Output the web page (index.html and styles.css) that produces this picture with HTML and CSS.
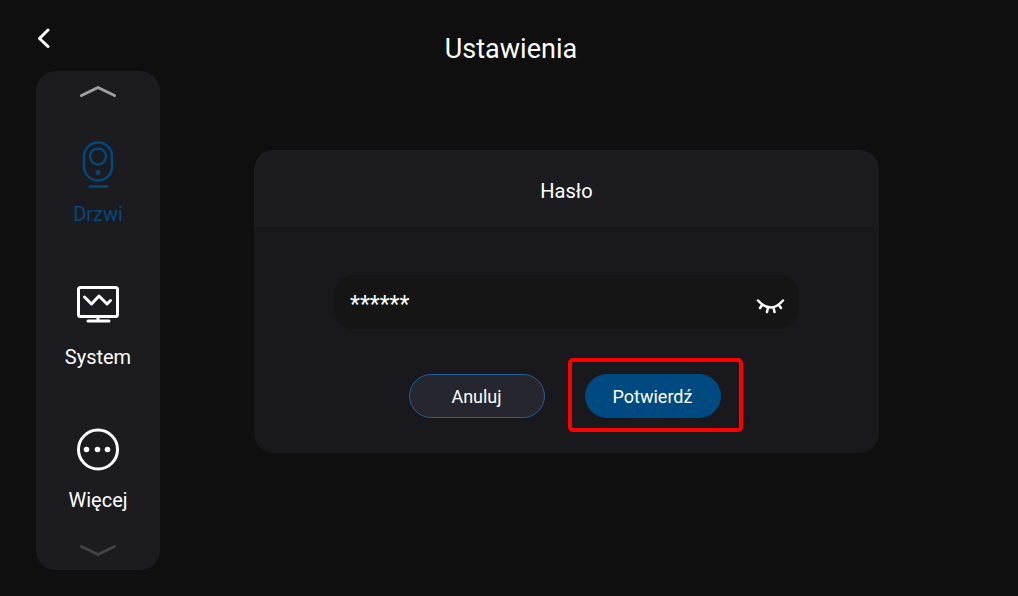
FILE: index.html
```html
<!DOCTYPE html>
<html lang="pl">
<head>
  <meta charset="UTF-8" />
  <meta name="viewport" content="width=device-width, initial-scale=1.0" />
  <title>Ustawienia</title>
  <link rel="stylesheet" href="styles.css">
</head>
<body>
  <header class="topbar">
    <button class="icon-btn back" type="button" aria-label="Wstecz">
      <svg width="14" height="20" viewBox="0 0 14 20"><path d="M12 2 3.500 10.500l8.500 8" /></svg>
    </button>
    <h1>Ustawienia</h1>
  </header>

  <div class="layout">
    <nav class="sidebar">
      <button class="icon-btn scroll-up" type="button" aria-label="W górę">
        <svg width="38" height="14" viewBox="0 0 38 14"><path d="M2.500 10.500 19 2.500l16.500 8" /></svg>
      </button>
      <ul class="menu">
        <li>
          <a class="menu-item active" href="#drzwi">
            <svg width="44" height="48" viewBox="0 0 44 48">
              <rect x="8" y="1.500" width="28" height="38" rx="14" />
              <circle cx="22" cy="15.500" r="8" />
              <circle class="dot" cx="22" cy="31.500" r="2.500" />
              <path d="M14 45.500h17" />
            </svg>
            <span>Drzwi</span>
          </a>
        </li>
        <li>
          <a class="menu-item" href="#system">
            <svg width="44" height="48" viewBox="0 0 44 48">
              <rect x="2.500" y="3.500" width="39" height="29" rx="2" />
              <path d="M8.500 13l7 7 7.500-8 8 8 3.500-3.500M22 33v4M12 37h21" />
            </svg>
            <span>System</span>
          </a>
        </li>
        <li>
          <a class="menu-item" href="#wiecej">
            <svg width="44" height="48" viewBox="0 0 44 48">
              <circle cx="22" cy="22.500" r="19.500" />
              <circle class="dot" cx="10.500" cy="22.500" r="2.800" />
              <circle class="dot" cx="21.500" cy="22.500" r="2.800" />
              <circle class="dot" cx="31.500" cy="22.500" r="2.800" />
            </svg>
            <span>Więcej</span>
          </a>
        </li>
      </ul>
      <button class="icon-btn scroll-down" type="button" aria-label="W dół">
        <svg width="38" height="14" viewBox="0 0 38 14"><path d="M2.500 3.500l16.500 8 16.500-8" /></svg>
      </button>
    </nav>

    <main class="content">
      <form class="dialog">
        <h2><label for="password">Hasło</label></h2>
        <div class="dialog-body">
          <div class="field">
            <input type="text" id="password" value="******" autocomplete="off">
            <button class="icon-btn eye" type="button" aria-label="Pokaż hasło">
              <svg width="30" height="18" viewBox="0 0 30 18">
                <path d="M3 3.500Q15.500 17.500 28 3.500M7.500 7.500l-2.500 3.500M13 10.500l-1 4.500M18.500 10.500l1 4.500M23.500 7.500l2.500 3.500" />
              </svg>
            </button>
          </div>
          <div class="actions">
            <button class="btn" type="button">Anuluj</button>
            <div class="highlight">
              <button class="btn primary" type="button">Potwierdź</button>
            </div>
          </div>
        </div>
      </form>
    </main>
  </div>
</body>
</html>
```

FILE: styles.css
```css
* {
  box-sizing: border-box;
}
body {
  margin: 0;
  min-height: 100vh;
  background: #0f0f0f;
  color: #fff;
  font-family: Roboto, "Noto Sans", sans-serif;
  display: flex;
  flex-direction: column;
}
svg {
  display: block;
  fill: none;
  stroke: currentColor;
  stroke-width: 3;
  stroke-linecap: round;
  stroke-linejoin: round;
}
svg .dot {
  fill: currentColor;
  stroke: none;
}
.icon-btn {
  padding: 0;
  border: 0;
  background: none;
  color: inherit;
}

/* top bar */
.topbar {
  display: grid;
  grid-template-columns: 60px 1fr 60px;
  align-items: center;
  padding: 28px 32px 0 36px;
}
.back {
  justify-self: start;
  align-self: start;
}
h1 {
  margin: 0;
  padding-top: 4px;
  font-size: 27px;
  line-height: 34px;
  font-weight: 400;
  text-align: center;
}

/* sidebar */
.layout {
  flex: 1;
  display: flex;
  padding: 5px 45px 26px 36px;
}
.sidebar {
  width: 124px;
  padding: 14px 0 13px;
  display: flex;
  flex-direction: column;
  align-items: center;
  justify-content: space-between;
  background: #1c1b20;
  border-radius: 20px;
}
.scroll-up {
  color: #a09fa1;
}
.scroll-down {
  color: #444345;
}
.menu {
  list-style: none;
  margin: 0;
  padding: 10px 0 0;
  display: flex;
  flex-direction: column;
  gap: 58px;
}
.menu-item {
  display: flex;
  flex-direction: column;
  align-items: center;
  gap: 13px;
  color: #fff;
  font-size: 20px;
  line-height: 24px;
  text-decoration: none;
}
.menu-item.active {
  color: #03477f;
}
.menu-item.active svg {
  stroke-width: 2.5;
}

/* password dialog */
.content {
  flex: 1;
  padding-top: 79px;
  display: flex;
  justify-content: center;
  align-items: flex-start;
}
.dialog {
  width: 100%;
  max-width: 625px;
  background: #19181c;
  border-radius: 20px;
  overflow: hidden;
}
.dialog h2 {
  margin: 0;
  padding: 29px 20px 24px;
  background: #1c1b20;
  font-size: 20px;
  line-height: 24px;
  font-weight: 400;
  text-align: center;
}
.dialog-body {
  padding: 48px 80px 35px;
}
.field {
  display: flex;
  align-items: center;
  height: 54px;
  padding: 0 14px 0 16px;
  background: #151515;
  border-radius: 20px;
}
.field input {
  flex: 1;
  min-width: 0;
  padding: 4px 0 0;
  border: 0;
  outline: 0;
  background: none;
  color: #fff;
  font: inherit;
  font-size: 23px;
}
.eye {
  padding-top: 8px;
}
.eye svg {
  stroke-width: 2.5;
}
.actions {
  display: flex;
  justify-content: center;
  gap: 40px;
  margin-top: 45px;
  padding-right: 4px;
}
.btn {
  width: 136px;
  height: 44px;
  border: 1px solid #1f5f9c;
  border-radius: 22px;
  background: #26272e;
  color: #fff;
  font: inherit;
  font-size: 18px;
}
.btn.primary {
  border-color: #004a82;
  background: #004a82;
}
.highlight {
  position: relative;
}
.highlight::after {
  content: "";
  position: absolute;
  inset: -16px -22px -14px -17px;
  border: 4px solid #f00;
  border-radius: 5px;
  pointer-events: none;
}
```
